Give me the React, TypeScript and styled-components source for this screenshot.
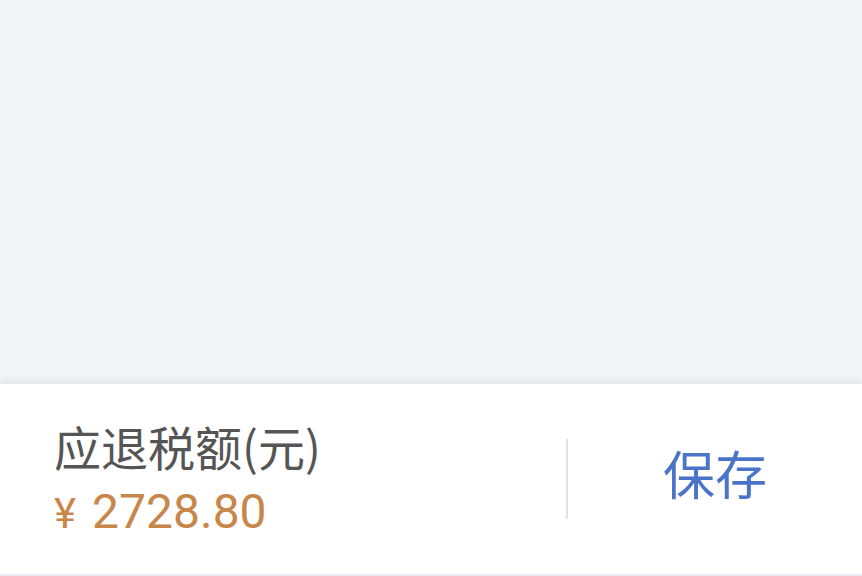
import styled, { createGlobalStyle } from "styled-components";

const GlobalStyle = createGlobalStyle`
  html, body {
    margin: 0;
    padding: 0;
    background: #f3f4f8;
  }
  #root {
    width: 862px;
    height: 576px;
  }
`;

const StyledPage = styled.div`
  display: flex;
  flex-direction: column;
  width: 862px;
  height: 576px;
  background: #f3f4f8;
  font-family: "Roboto", "Noto Sans CJK SC", sans-serif;
`;

const StyledContent = styled.div`
  flex: 1;
`;

const StyledFooter = styled.footer`
  display: flex;
  align-items: center;
  height: 190px;
  background: #fff;
  border-bottom: 2px solid #e6e9ee;
  box-shadow: 0 -3px 8px rgba(0, 0, 0, 0.08);
`;

const StyledSummary = styled.div`
  display: flex;
  flex-direction: column;
  width: 566px;
  padding-left: 54px;
  box-sizing: border-box;
`;

const StyledLabel = styled.div`
  font-family: "Noto Sans CJK SC", sans-serif;
  font-size: 47px;
  line-height: 56px;
  color: #555;
`;

const StyledAmount = styled.div`
  margin-top: 12px;
  font-size: 48px;
  line-height: 52px;
  color: #c8874a;

  span {
    margin-right: 16px;
    font-size: 42px;
  }
`;

const StyledDivider = styled.div`
  width: 2px;
  height: 80px;
  background: #e2e2e2;
`;

const StyledSaveButton = styled.button`
  flex: 1;
  border: 0;
  background: none;
  padding: 0 0 14px;
  font-family: "Noto Sans CJK SC", sans-serif;
  font-size: 52px;
  color: #4a74c8;
  cursor: pointer;
`;

export default function App() {
  return (
    <>
      <GlobalStyle />
      <StyledPage>
        <StyledContent />
        <StyledFooter>
          <StyledSummary>
            <StyledLabel>应退税额(元)</StyledLabel>
            <StyledAmount>
              <span>¥</span>2728.80
            </StyledAmount>
          </StyledSummary>
          <StyledDivider />
          <StyledSaveButton>保存</StyledSaveButton>
        </StyledFooter>
      </StyledPage>
    </>
  );
}
